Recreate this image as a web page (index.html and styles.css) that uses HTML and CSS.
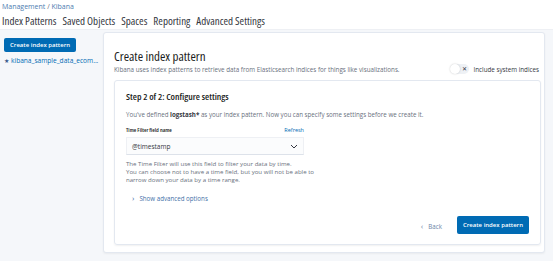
FILE: index.html
```html
<!DOCTYPE html>
<html lang="en">
<head>
    <meta charset="UTF-8">
    <meta name="viewport" content="width=device-width, initial-scale=1.0">
    <title>Create index pattern</title>
    <link rel="stylesheet" href="styles.css">
</head>
<body>
    <div class="topbar">
        <div class="crumbs"><a href="#">Management</a> / <span>Kibana</span></div>
        <div class="tabs">
            <a href="#">Index Patterns</a>
            <a href="#">Saved Objects</a>
            <a href="#">Spaces</a>
            <a href="#">Reporting</a>
            <a href="#">Advanced Settings</a>
        </div>
    </div>
    <div class="page">
        <div class="sidebar">
            <button class="btn">Create index pattern</button>
            <a class="pattern" href="#"><span class="star">&#9733;</span>kibana_sample_data_ecom...</a>
        </div>
        <div class="panel">
            <div class="head">
                <div>
                    <h1>Create index pattern</h1>
                    <p class="sub">Kibana uses index patterns to retrieve data from Elasticsearch indices for things like visualizations.</p>
                </div>
                <label class="toggle"><span class="switch"><span class="knob"></span><span class="x">&#10005;</span></span>Include system indices</label>
            </div>
            <div class="card">
                <h2>Step 2 of 2: Configure settings</h2>
                <p class="lead">You've defined <strong>logstash*</strong> as your index pattern. Now you can specify some settings before we create it.</p>
                <div class="field">
                    <div class="field-top"><span class="label">Time Filter field name</span><a href="#">Refresh</a></div>
                    <div class="select">@timestamp
                        <svg width="8" height="5" viewBox="0 0 8 5"><path d="M1 1l3 3 3-3" fill="none" stroke="#343741" stroke-width="1"/></svg>
                    </div>
                    <p class="help">The Time Filter will use this field to filter your data by time.<br>You can choose not to have a time field, but you will not be able to<br>narrow down your data by a time range.</p>
                </div>
                <a class="advanced" href="#"><span class="chev">&#8250;</span>Show advanced options</a>
                <div class="actions">
                    <a class="back" href="#"><span class="chev">&#8249;</span>Back</a>
                    <button class="btn big">Create index pattern</button>
                </div>
            </div>
        </div>
    </div>
</body>
</html>
```
FILE: styles.css
```css
body { margin: 0; font-family: "Open Sans", "Noto Sans", sans-serif; color: #343741; background: #f5f7fa; width: 553px; height: 261px; overflow: hidden; }
a { text-decoration: none; color: #006bb4; }
.topbar { background: #fff; height: 29px; border-bottom: 1px solid #eef0f4; }
.crumbs { font-size: 7px; color: #69707d; padding: 2px 0 0 2px; height: 9px; line-height: 9px; }
.crumbs a, .crumbs span { color: #4d7cb0; }
.tabs { display: flex; gap: 6px; padding-left: 2px; margin-top: 3px; font-size: 11px; font-stretch: 75%; line-height: 13px; }
.tabs a { color: #343741; }
.page { display: flex; padding-top: 2px; }
.sidebar { width: 99px; padding: 6px 0 0 4px; display: flex; flex-direction: column; align-items: flex-start; gap: 4px; }
.btn { background: #006bb4; color: #fff; border: none; border-radius: 2px; font-family: inherit; font-size: 6px; font-weight: 600; height: 14px; padding: 0 6px; cursor: pointer; }
.pattern { font-size: 6.6px; color: #006bb4; white-space: nowrap; }
.star { font-size: 6px; margin-right: 2px; color: #3c5a8c; }
.panel { width: 442px; height: 221px; box-sizing: border-box; background: #fff; border: 1px solid #e3e8f0; border-radius: 3px; box-shadow: 0 1px 2px rgba(0, 0, 0, 0.05); padding: 15px 5px 8px 10px; }
.head { display: flex; justify-content: space-between; align-items: flex-end; }
h1 { margin: 0; font-size: 13px; font-stretch: 75%; font-weight: 500; line-height: 16px; color: #1a1c21; }
.sub { margin: 2px 0 0; font-size: 6.25px; color: #69707d; line-height: 8px; }
.toggle { display: flex; align-items: center; gap: 5px; font-size: 6.25px; color: #343741; }
.switch { position: relative; width: 19px; height: 10px; border-radius: 5px; background: #eef1f5; }
.knob { position: absolute; left: 0; top: 0; width: 10px; height: 10px; border-radius: 50%; background: #fff; box-shadow: 0 0 2px rgba(0, 0, 0, 0.2); }
.x { position: absolute; right: 2px; top: 1px; font-size: 6px; line-height: 8px; color: #343741; }
.card { margin-top: 6px; width: 427px; height: 165px; box-sizing: border-box; border: 1px solid #e3e8f0; border-radius: 3px; box-shadow: 0 1px 2px rgba(0, 0, 0, 0.06); padding: 10px 11px; position: relative; }
h2 { margin: 0; font-size: 9.5px; font-stretch: 75%; font-weight: 600; line-height: 12px; color: #1a1c21; }
.lead { margin: 8px 0 0; font-size: 6.2px; line-height: 8px; color: #69707d; }
.lead strong { color: #343741; }
.field { width: 178px; margin-top: 7px; }
.field-top { display: flex; justify-content: space-between; font-size: 5.8px; line-height: 8px; }
.label { font-weight: 600; font-stretch: 75%; color: #1a1c21; }
.field-top a { font-size: 5.5px; }
.select { margin-top: 3px; height: 18px; box-sizing: border-box; background: #fbfcfd; border: 1px solid #eef0f4; border-bottom-color: #dde2ea; display: flex; justify-content: space-between; align-items: center; padding: 0 5px; font-size: 6.5px; color: #343741; }
.help { margin: 5px 0 0; font-size: 6.1px; line-height: 8px; color: #69707d; white-space: nowrap; }
.advanced { display: block; margin-top: 10px; padding-left: 6px; font-size: 6.2px; line-height: 8px; color: #3f6fa7; }
.chev { font-size: 8px; margin-right: 5px; }
.actions { position: absolute; right: 11px; bottom: 10px; display: flex; align-items: center; gap: 15px; }
.back { font-size: 6.2px; color: #6b86a8; }
.big { height: 18px; padding: 0 6px; }
```
